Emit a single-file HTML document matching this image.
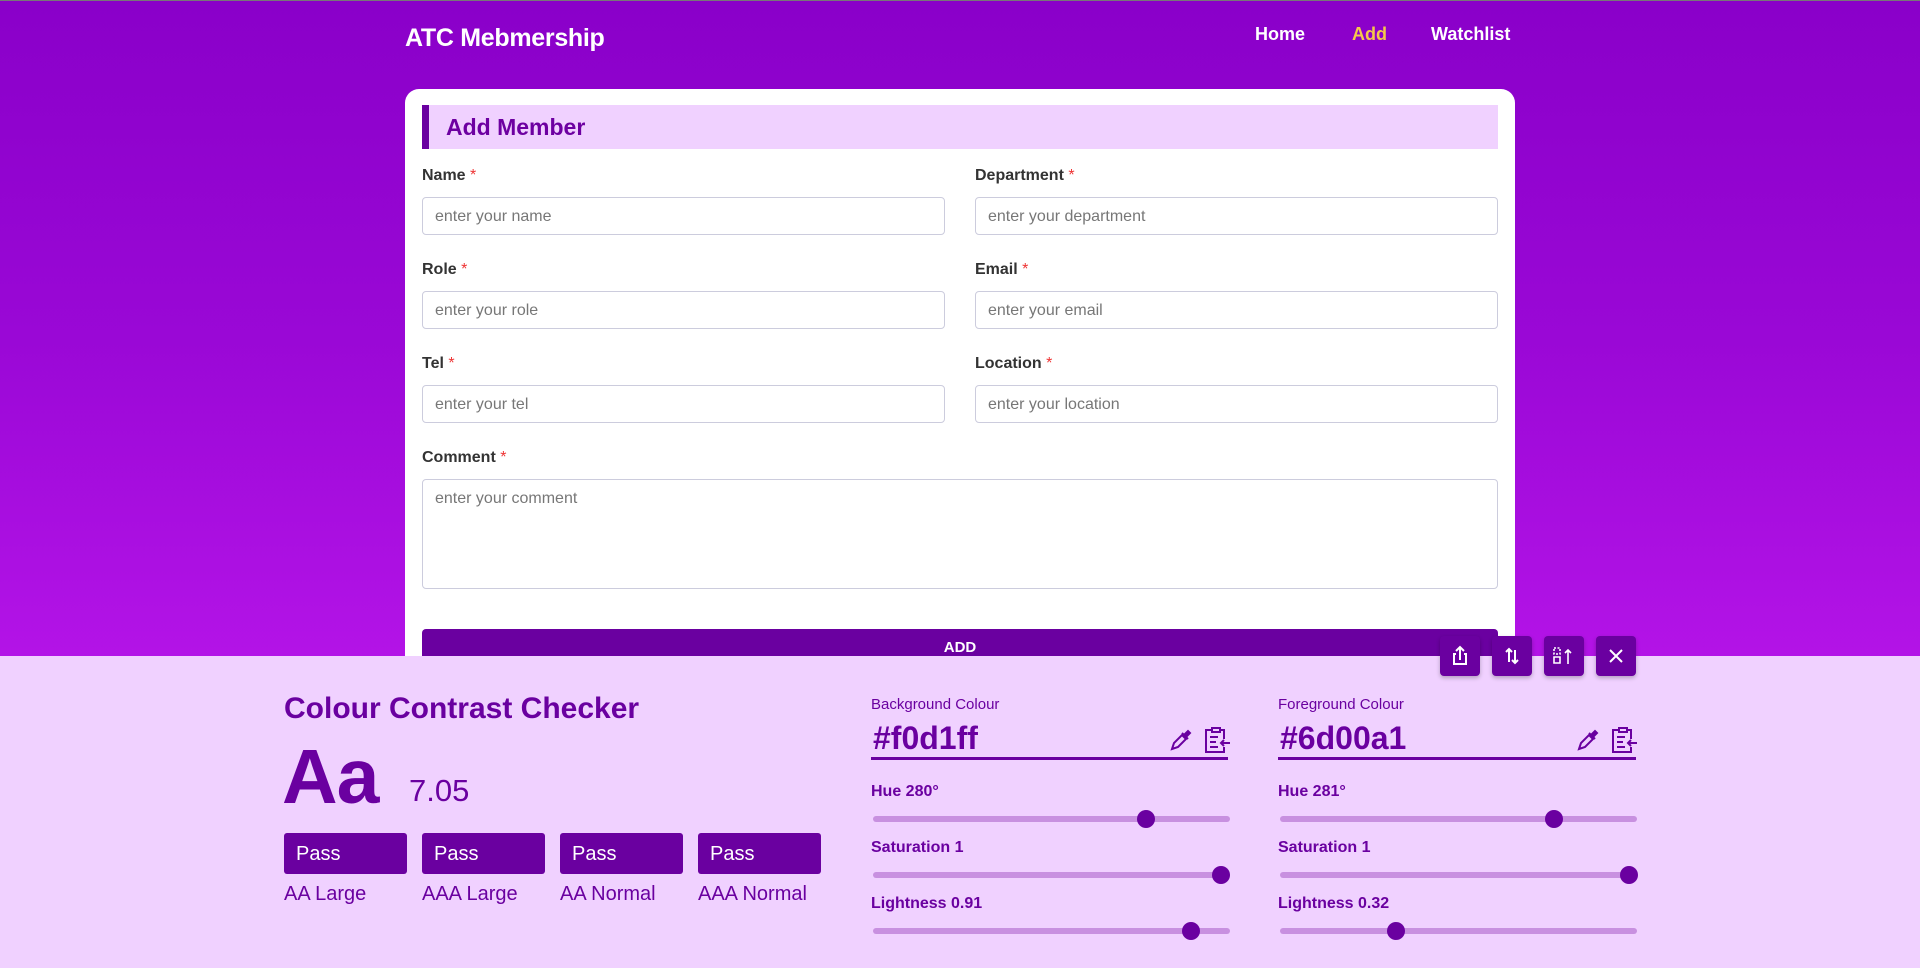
<!DOCTYPE html>
<html><head><meta charset="utf-8"><style>
*{box-sizing:border-box;margin:0;padding:0}
body{width:1920px;height:967px;overflow:hidden;position:relative;font-family:"Liberation Sans",sans-serif;background:linear-gradient(180deg,#8a00c9 0%,#9a08d6 35%,#b514e8 70%,#b818ea 100%);border-top:1px solid #777}
.a{position:absolute}
.title{left:405px;top:23px;font-size:25px;font-weight:bold;color:#fff;letter-spacing:-0.3px}
.nav{top:23px;font-size:18px;font-weight:bold;color:#fff}
.card{left:405px;top:88px;width:1110px;height:700px;background:#fff;border-radius:14px}
.hb{left:422px;top:104px;width:1076px;height:44px;background:#f0d1ff;border-left:7px solid #6a00a0;padding-left:17px;font-size:23px;font-weight:bold;color:#6d00a1;line-height:44px}
.lb{font-size:16px;color:#333;font-weight:bold}
.lb span{color:#e33;font-weight:normal}
.in{height:38px;border:1px solid #ccd;border-radius:4px;font-size:16px;color:#777;padding:10px 12px;background:#fff}
.btn{left:422px;top:628px;width:1076px;height:40px;background:#6a00a0;border-radius:4px;color:#fff;font-weight:bold;font-size:15px;text-align:center;padding-top:10px}
.panel{left:0;top:655px;width:1920px;height:312px;background:#f0d1ff}
.p{color:#6a00a0}
.ib{top:635px;width:40px;height:40px;background:#6a00a0;border-radius:4px;box-shadow:0 2px 4px rgba(0,0,0,.25)}
.pass{top:832px;width:123px;height:41px;background:#6a00a0;border-radius:3px;color:#fff;font-size:20px;padding:10px 12px}
.pl{top:882px;font-size:20px;color:#6a00a0}
.trk{height:6px;background:#c890e0;border-radius:3px}
.th{width:18px;height:18px;border-radius:50%;background:#6a00a0}
.sl{font-size:16px;font-weight:bold;color:#6a00a0}
</style></head><body>
<div class="a title">ATC Mebmership</div>
<div class="a nav" style="left:1255px">Home</div>
<div class="a nav" style="left:1352px;color:#f5c84a">Add</div>
<div class="a nav" style="left:1431px">Watchlist</div>
<div class="a card"></div>
<div class="a hb">Add Member</div>
<div class="a lb" style="left:422px;top:166px">Name <span>*</span></div>
<div class="a in" style="left:422px;top:196px;width:523px">enter your name</div>
<div class="a lb" style="left:975px;top:166px">Department <span>*</span></div>
<div class="a in" style="left:975px;top:196px;width:523px">enter your department</div>
<div class="a lb" style="left:422px;top:260px">Role <span>*</span></div>
<div class="a in" style="left:422px;top:290px;width:523px">enter your role</div>
<div class="a lb" style="left:975px;top:260px">Email <span>*</span></div>
<div class="a in" style="left:975px;top:290px;width:523px">enter your email</div>
<div class="a lb" style="left:422px;top:354px">Tel <span>*</span></div>
<div class="a in" style="left:422px;top:384px;width:523px">enter your tel</div>
<div class="a lb" style="left:975px;top:354px">Location <span>*</span></div>
<div class="a in" style="left:975px;top:384px;width:523px">enter your location</div>
<div class="a lb" style="left:422px;top:448px">Comment <span>*</span></div>
<div class="a in" style="left:422px;top:478px;width:1076px;height:110px">enter your comment</div>
<div class="a btn">ADD</div>
<div class="a panel"></div>
<div class="a ib" style="left:1440px"><svg width="40" height="40" viewBox="0 0 40 40" fill="none" stroke="#fff" stroke-width="2"><path d="M16 18h-2v10h12V18h-2M20 24V11M16 15l4-4 4 4"/></svg></div>
<div class="a ib" style="left:1492px"><svg width="40" height="40" viewBox="0 0 40 40" fill="none" stroke="#fff" stroke-width="2"><path d="M17 26V13M14 16l3-3 3 3M23 14v13M20 24l3 3 3-3"/></svg></div>
<div class="a ib" style="left:1544px"><svg width="40" height="40" viewBox="0 0 40 40" fill="none" stroke="#fff" stroke-width="1.6"><path d="M10 12h6v6h-6z" stroke-dasharray="2 1.5"/><path d="M10 21h6v6h-6zM24 28V14M21 17l3-3 3 3"/></svg></div>
<div class="a ib" style="left:1596px"><svg width="40" height="40" viewBox="0 0 40 40" fill="none" stroke="#fff" stroke-width="2"><path d="M14 14l12 12M26 14L14 26"/></svg></div>
<div class="a p" style="left:284px;top:691px;font-size:30px;font-weight:bold">Colour Contrast Checker</div>
<div class="a p" style="left:282px;top:732px;font-size:77px;font-weight:bold;letter-spacing:-1px">Aa</div>
<div class="a p" style="left:409px;top:772px;font-size:31px">7.05</div>
<div class="a pass" style="left:284px">Pass</div><div class="a pass" style="left:422px">Pass</div><div class="a pass" style="left:560px">Pass</div><div class="a pass" style="left:698px">Pass</div>
<div class="a pl" style="left:284px">AA Large</div><div class="a pl" style="left:422px">AAA Large</div><div class="a pl" style="left:560px">AA Normal</div><div class="a pl" style="left:698px">AAA Normal</div>

<div class="a p" style="left:871px;top:695px;font-size:15px">Background Colour</div>
<div class="a p" style="left:873px;top:719px;font-size:32px;font-weight:bold">#f0d1ff</div>
<div class="a" style="left:871px;top:756px;width:357px;height:3px;background:#6a00a0"></div>
<div class="a sl" style="left:871px;top:782px">Hue 280°</div>
<div class="a trk" style="left:873px;top:815px;width:357px"></div><div class="a th" style="left:1137px;top:809px"></div>
<div class="a sl" style="left:871px;top:838px">Saturation 1</div>
<div class="a trk" style="left:873px;top:871px;width:357px"></div><div class="a th" style="left:1212px;top:865px"></div>
<div class="a sl" style="left:871px;top:894px">Lightness 0.91</div>
<div class="a trk" style="left:873px;top:927px;width:357px"></div><div class="a th" style="left:1182px;top:921px"></div>

<div class="a p" style="left:1278px;top:695px;font-size:15px">Foreground Colour</div>
<div class="a p" style="left:1280px;top:719px;font-size:32px;font-weight:bold">#6d00a1</div>
<div class="a" style="left:1278px;top:756px;width:358px;height:3px;background:#6a00a0"></div>
<div class="a sl" style="left:1278px;top:782px">Hue 281°</div>
<div class="a trk" style="left:1280px;top:815px;width:357px"></div><div class="a th" style="left:1545px;top:809px"></div>
<div class="a sl" style="left:1278px;top:838px">Saturation 1</div>
<div class="a trk" style="left:1280px;top:871px;width:357px"></div><div class="a th" style="left:1620px;top:865px"></div>
<div class="a sl" style="left:1278px;top:894px">Lightness 0.32</div>
<div class="a trk" style="left:1280px;top:927px;width:357px"></div><div class="a th" style="left:1387px;top:921px"></div>

<svg class="a" style="left:1168px;top:726px" width="26" height="26" viewBox="0 0 26 26" fill="none" stroke="#6a00a0" stroke-width="2"><path d="M4 22l2-6 8-8 4 4-8 8z"/><path d="M14 6l6 6M16 8l4-4 2 2-4 4" fill="#6a00a0"/></svg>
<svg class="a" style="left:1203px;top:724px" width="28" height="30" viewBox="0 0 28 30" fill="none" stroke="#6a00a0" stroke-width="2"><path d="M9 5H3v22h18v-5M17 5h4v9M9 3h8v4H9zM7 12h8M7 17h6M7 22h8M27 18h-9M21 15l-3 3 3 3"/></svg>
<svg class="a" style="left:1575px;top:726px" width="26" height="26" viewBox="0 0 26 26" fill="none" stroke="#6a00a0" stroke-width="2"><path d="M4 22l2-6 8-8 4 4-8 8z"/><path d="M14 6l6 6M16 8l4-4 2 2-4 4" fill="#6a00a0"/></svg>
<svg class="a" style="left:1610px;top:724px" width="28" height="30" viewBox="0 0 28 30" fill="none" stroke="#6a00a0" stroke-width="2"><path d="M9 5H3v22h18v-5M17 5h4v9M9 3h8v4H9zM7 12h8M7 17h6M7 22h8M27 18h-9M21 15l-3 3 3 3"/></svg>
</body></html>
